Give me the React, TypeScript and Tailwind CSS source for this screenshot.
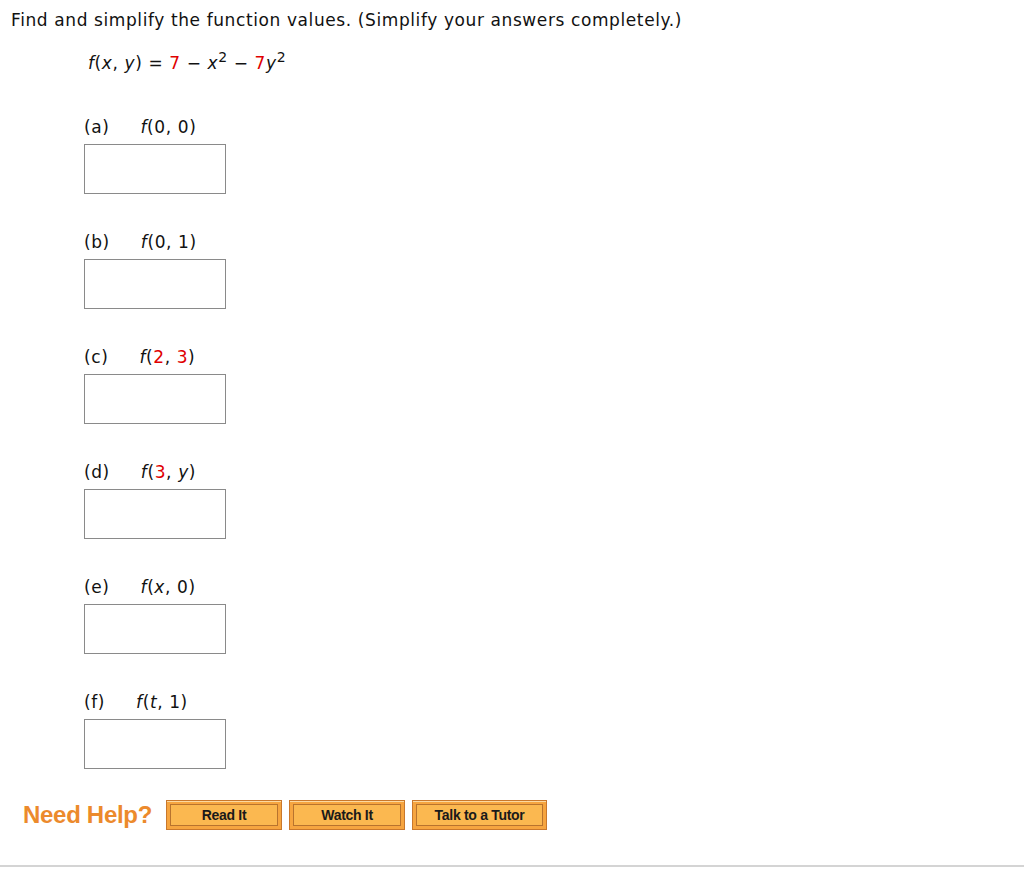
import React from "react";

const parts = [
  { label: "(a)", arg: <>0, 0</> },
  { label: "(b)", arg: <>0, 1</> },
  { label: "(c)", arg: <><span className="text-[#e00000]">2</span>, <span className="text-[#e00000]">3</span></> },
  { label: "(d)", arg: <><span className="text-[#e00000]">3</span>, <i>y</i></> },
  { label: "(e)", arg: <><i>x</i>, 0</> },
  { label: "(f)", arg: <><i>t</i>, 1</> },
];

function HelpButton({ text, width }: { text: string; width: string }) {
  return (
    <div className={`${width} h-[30px] border border-[#c9782c] bg-[#f6a540] p-[3px] shadow-[inset_0_1px_0_#fcd9a0]`}>
      <div className="h-full border border-[#b8732e] bg-[#fbb850] flex items-center justify-center text-[14px] font-bold text-[#1a1a1a] font-['Liberation_Sans',Arial,sans-serif] tracking-[-0.3px]">
        {text}
      </div>
    </div>
  );
}

export default function App() {
  return (
    <div className="w-[1024px] h-[889px] overflow-hidden bg-white text-[#111] font-['DejaVu_Sans',Verdana,sans-serif] text-[17px] tracking-[0.6px] leading-none">
      <div className="pt-[12px] pl-[11px]">Find and simplify the function values. (Simplify your answers completely.)</div>
      <div className="pl-[88px] pt-[26px]">
        <i>f</i>(<i>x</i>, <i>y</i>) = <span className="text-[#e00000]">7</span> − <i>x</i>
        <sup className="text-[14px]">2</sup> − <span className="text-[#e00000]">7</span><i>y</i>
        <sup className="text-[14px]">2</sup>
      </div>
      <div className="pl-[84px] pt-[47px] flex flex-col gap-[40px]">
        {parts.map((p) => (
          <div key={p.label}>
            <div className="flex">
              <span>{p.label}</span>
              <span className="ml-[31px]">
                <i>f</i>({p.arg})
              </span>
            </div>
            <div className="mt-[8px] w-[142px] h-[50px] border border-[#8a8a8a] bg-white" />
          </div>
        ))}
      </div>
      <div className="flex items-center pl-[23px] pt-[31px]">
        <span className="text-[#ec8a2c] font-bold text-[24px] tracking-[-0.3px] font-['Liberation_Sans',Arial,sans-serif] mr-[14px]">Need Help?</span>
        <div className="flex gap-[7px] tracking-normal">
          <HelpButton text="Read It" width="w-[116px]" />
          <HelpButton text="Watch It" width="w-[116px]" />
          <HelpButton text="Talk to a Tutor" width="w-[135px]" />
        </div>
      </div>
      <div className="mt-[35px] h-[2px] bg-[#d4d4d4]" />
    </div>
  );
}
